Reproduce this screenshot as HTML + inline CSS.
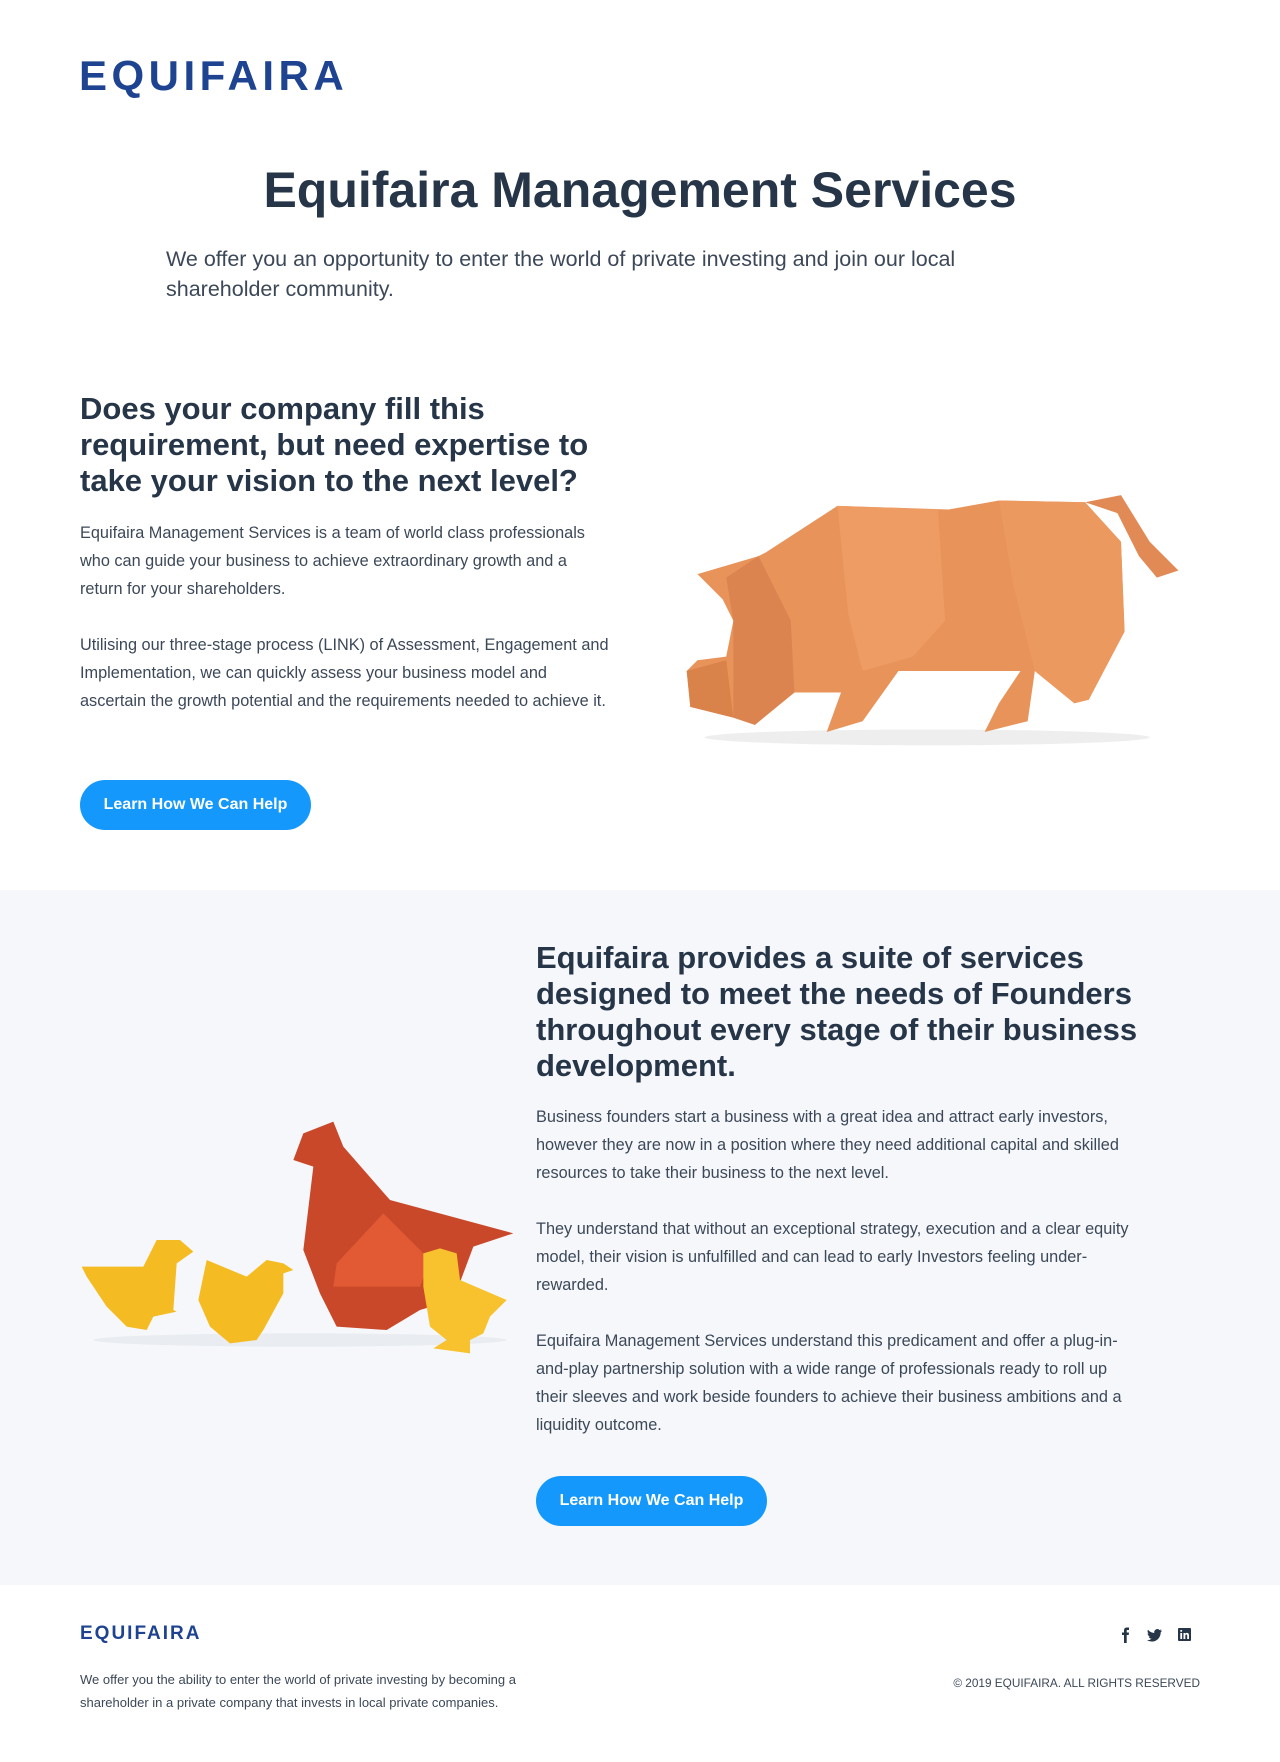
<!DOCTYPE html>
<html><head><meta charset="utf-8"><style>
*{margin:0;padding:0;box-sizing:border-box}
body{width:1280px;height:1762px;background:#fff;font-family:"Liberation Sans",sans-serif;color:#263547;position:relative;overflow:hidden}
.a{position:absolute}
.logo{font-weight:bold;color:#1e4391;letter-spacing:4px}
h1{font-size:50px;font-weight:bold;text-align:center;width:1280px;left:0}
h2{font-size:31px;font-weight:bold;line-height:36px;color:#263547}
p.t{font-size:16.3px;line-height:28px;color:#3c4858}
.btn{background:#1598fc;color:#fff;border-radius:25px;width:231px;height:50px;line-height:50px;text-align:center;font-size:16px;font-weight:bold}
</style></head><body>
<div class="a logo" style="left:79px;top:52px;font-size:42px;letter-spacing:4.5px">EQUIFAIRA</div>
<h1 class="a" style="top:161px">Equifaira Management Services</h1>
<div class="a" style="left:166px;top:244px;width:870px;font-size:21.5px;line-height:30px;color:#3c4858">We offer you an opportunity to enter the world of private investing and join our local shareholder community.</div>

<h2 class="a" style="left:80px;top:391px;width:540px">Does your company fill this requirement, but need expertise to take your vision to the next level?</h2>
<p class="a t" style="left:80px;top:519px;width:530px">Equifaira Management Services is a team of world class professionals who can guide your business to achieve extraordinary growth and a return for your shareholders.</p>
<p class="a t" style="left:80px;top:631px;width:530px">Utilising our three-stage process (LINK) of Assessment, Engagement and Implementation, we can quickly assess your business model and ascertain the growth potential and the requirements needed to achieve it.</p>
<div class="a btn" style="left:80px;top:780px">Learn How We Can Help</div>

<svg class="a" style="left:640px;top:470px" width="560" height="290" viewBox="0 0 1560 808">
<ellipse cx="800" cy="745" rx="620" ry="22" fill="#eee"/>
<polygon fill="#e8935a" points="550,100 860,110 1000,85 1240,90 1340,200 1350,450 1250,640 1210,650 1100,560 1080,700 960,730 1000,650 1060,560 720,560 620,700 520,730 560,620 430,620 320,710 260,690 140,660 130,560 160,530 240,520 260,420 230,360 160,290 330,240 350,230"/>
<polygon fill="#ee9c63" points="550,100 830,110 850,420 760,520 620,560 580,400"/>
<polygon fill="#ec9960" points="1000,85 1240,90 1340,200 1350,450 1250,640 1210,650 1100,560 1040,320"/>
<polygon fill="#dc8450" points="240,300 330,240 420,420 430,620 320,710 260,690 260,420"/>
<polygon fill="#e18a55" points="1240,90 1340,70 1420,200 1500,280 1440,300 1390,240 1330,120"/>
<polygon fill="#d9824a" points="130,560 240,530 260,690 140,660"/>
</svg>

<div class="a" style="left:0;top:890px;width:1280px;height:695px;background:#f5f7fa"></div>
<svg class="a" style="left:70px;top:1100px" width="460" height="270" viewBox="0 0 1380 810">
<ellipse cx="690" cy="720" rx="620" ry="20" fill="#e9ecf0"/>
<polygon fill="#c9482a" points="700,100 790,65 820,140 960,300 1330,400 1210,440 1150,600 1050,630 950,690 800,680 750,580 700,450 730,200 670,180"/>
<polygon fill="#e25a34" points="800,490 940,340 1080,480 1050,560 790,560"/>
<polygon fill="#f5bb22" points="35,500 220,500 260,420 330,420 370,455 320,490 310,630 320,635 250,650 230,690 170,680 110,620 50,530"/>
<polygon fill="#f5bb22" points="410,480 530,530 590,480 640,490 670,510 640,520 640,580 580,690 560,720 480,730 420,680 385,600"/>
<polygon fill="#f7c22e" points="1060,460 1110,445 1160,460 1170,540 1310,600 1260,650 1240,700 1200,720 1200,760 1090,745 1130,720 1080,680 1060,560"/>
</svg>
<h2 class="a" style="left:536px;top:940px;width:620px">Equifaira provides a suite of services designed to meet the needs of Founders throughout every stage of their business development.</h2>
<p class="a t" style="left:536px;top:1103px;width:600px">Business founders start a business with a great idea and attract early investors, however they are now in a position where they need additional capital and skilled resources to take their business to the next level.</p>
<p class="a t" style="left:536px;top:1215px;width:600px">They understand that without an exceptional strategy, execution and a clear equity model, their vision is unfulfilled and can lead to early Investors feeling under-rewarded.</p>
<p class="a t" style="left:536px;top:1327px;width:600px">Equifaira Management Services understand this predicament and offer a plug-in-and-play partnership solution with a wide range of professionals ready to roll up their sleeves and work beside founders to achieve their business ambitions and a liquidity outcome.</p>
<div class="a btn" style="left:536px;top:1476px">Learn How We Can Help</div>

<div class="a logo" style="left:80px;top:1623px;font-size:19px;letter-spacing:2px">EQUIFAIRA</div>
<div class="a" style="left:80px;top:1668px;width:490px;font-size:13px;line-height:23px;color:#3c4858">We offer you the ability to enter the world of private investing by becoming a shareholder in a private company that invests in local private companies.</div>
<div class="a" style="right:80px;top:1676px;font-size:11.8px;color:#3c4858">© 2019 EQUIFAIRA. ALL RIGHTS RESERVED</div>
<svg class="a" style="left:1118px;top:1626px" width="76" height="18" viewBox="0 0 76 18">
<path d="M6 17V9H4V6.5h2V4.5C6 2.5 7 1.5 9 1.5h2V4H9.5c-.6 0-.8.3-.8.9V6.5H11L10.7 9H8.7v8z" fill="#263547"/>
<path d="M44 4.5c-.6.3-1.2.4-1.8.5.7-.4 1.1-1 1.4-1.7-.6.4-1.3.6-2 .8a3.1 3.1 0 0 0-5.3 2.8C33.8 6.8 31.5 5.6 30 3.7c-.8 1.4-.4 3.2 1 4.1-.5 0-1-.2-1.4-.4 0 1.5 1.1 2.8 2.5 3.1-.5.1-1 .2-1.4.1.4 1.3 1.6 2.1 2.9 2.2A6.3 6.3 0 0 1 29 14.1c1.4.9 3 1.4 4.8 1.4 5.8 0 9-4.9 8.9-9.300.6-.4 1.1-1 1.3-1.7z" fill="#263547"/>
<rect x="60" y="2" width="13" height="13" rx="1" fill="#263547"/>
<rect x="62.3" y="7" width="1.8" height="6" fill="#fff"/><circle cx="63.2" cy="4.9" r="1" fill="#fff"/>
<path d="M65.5 7h1.7v.9c.4-.7 1-1 1.8-1 1.3 0 2 .8 2 2.4V13h-1.8V9.7c0-.8-.3-1.2-.9-1.2s-1 .4-1 1.2V13h-1.8z" fill="#fff"/>
</svg>
</body></html>
